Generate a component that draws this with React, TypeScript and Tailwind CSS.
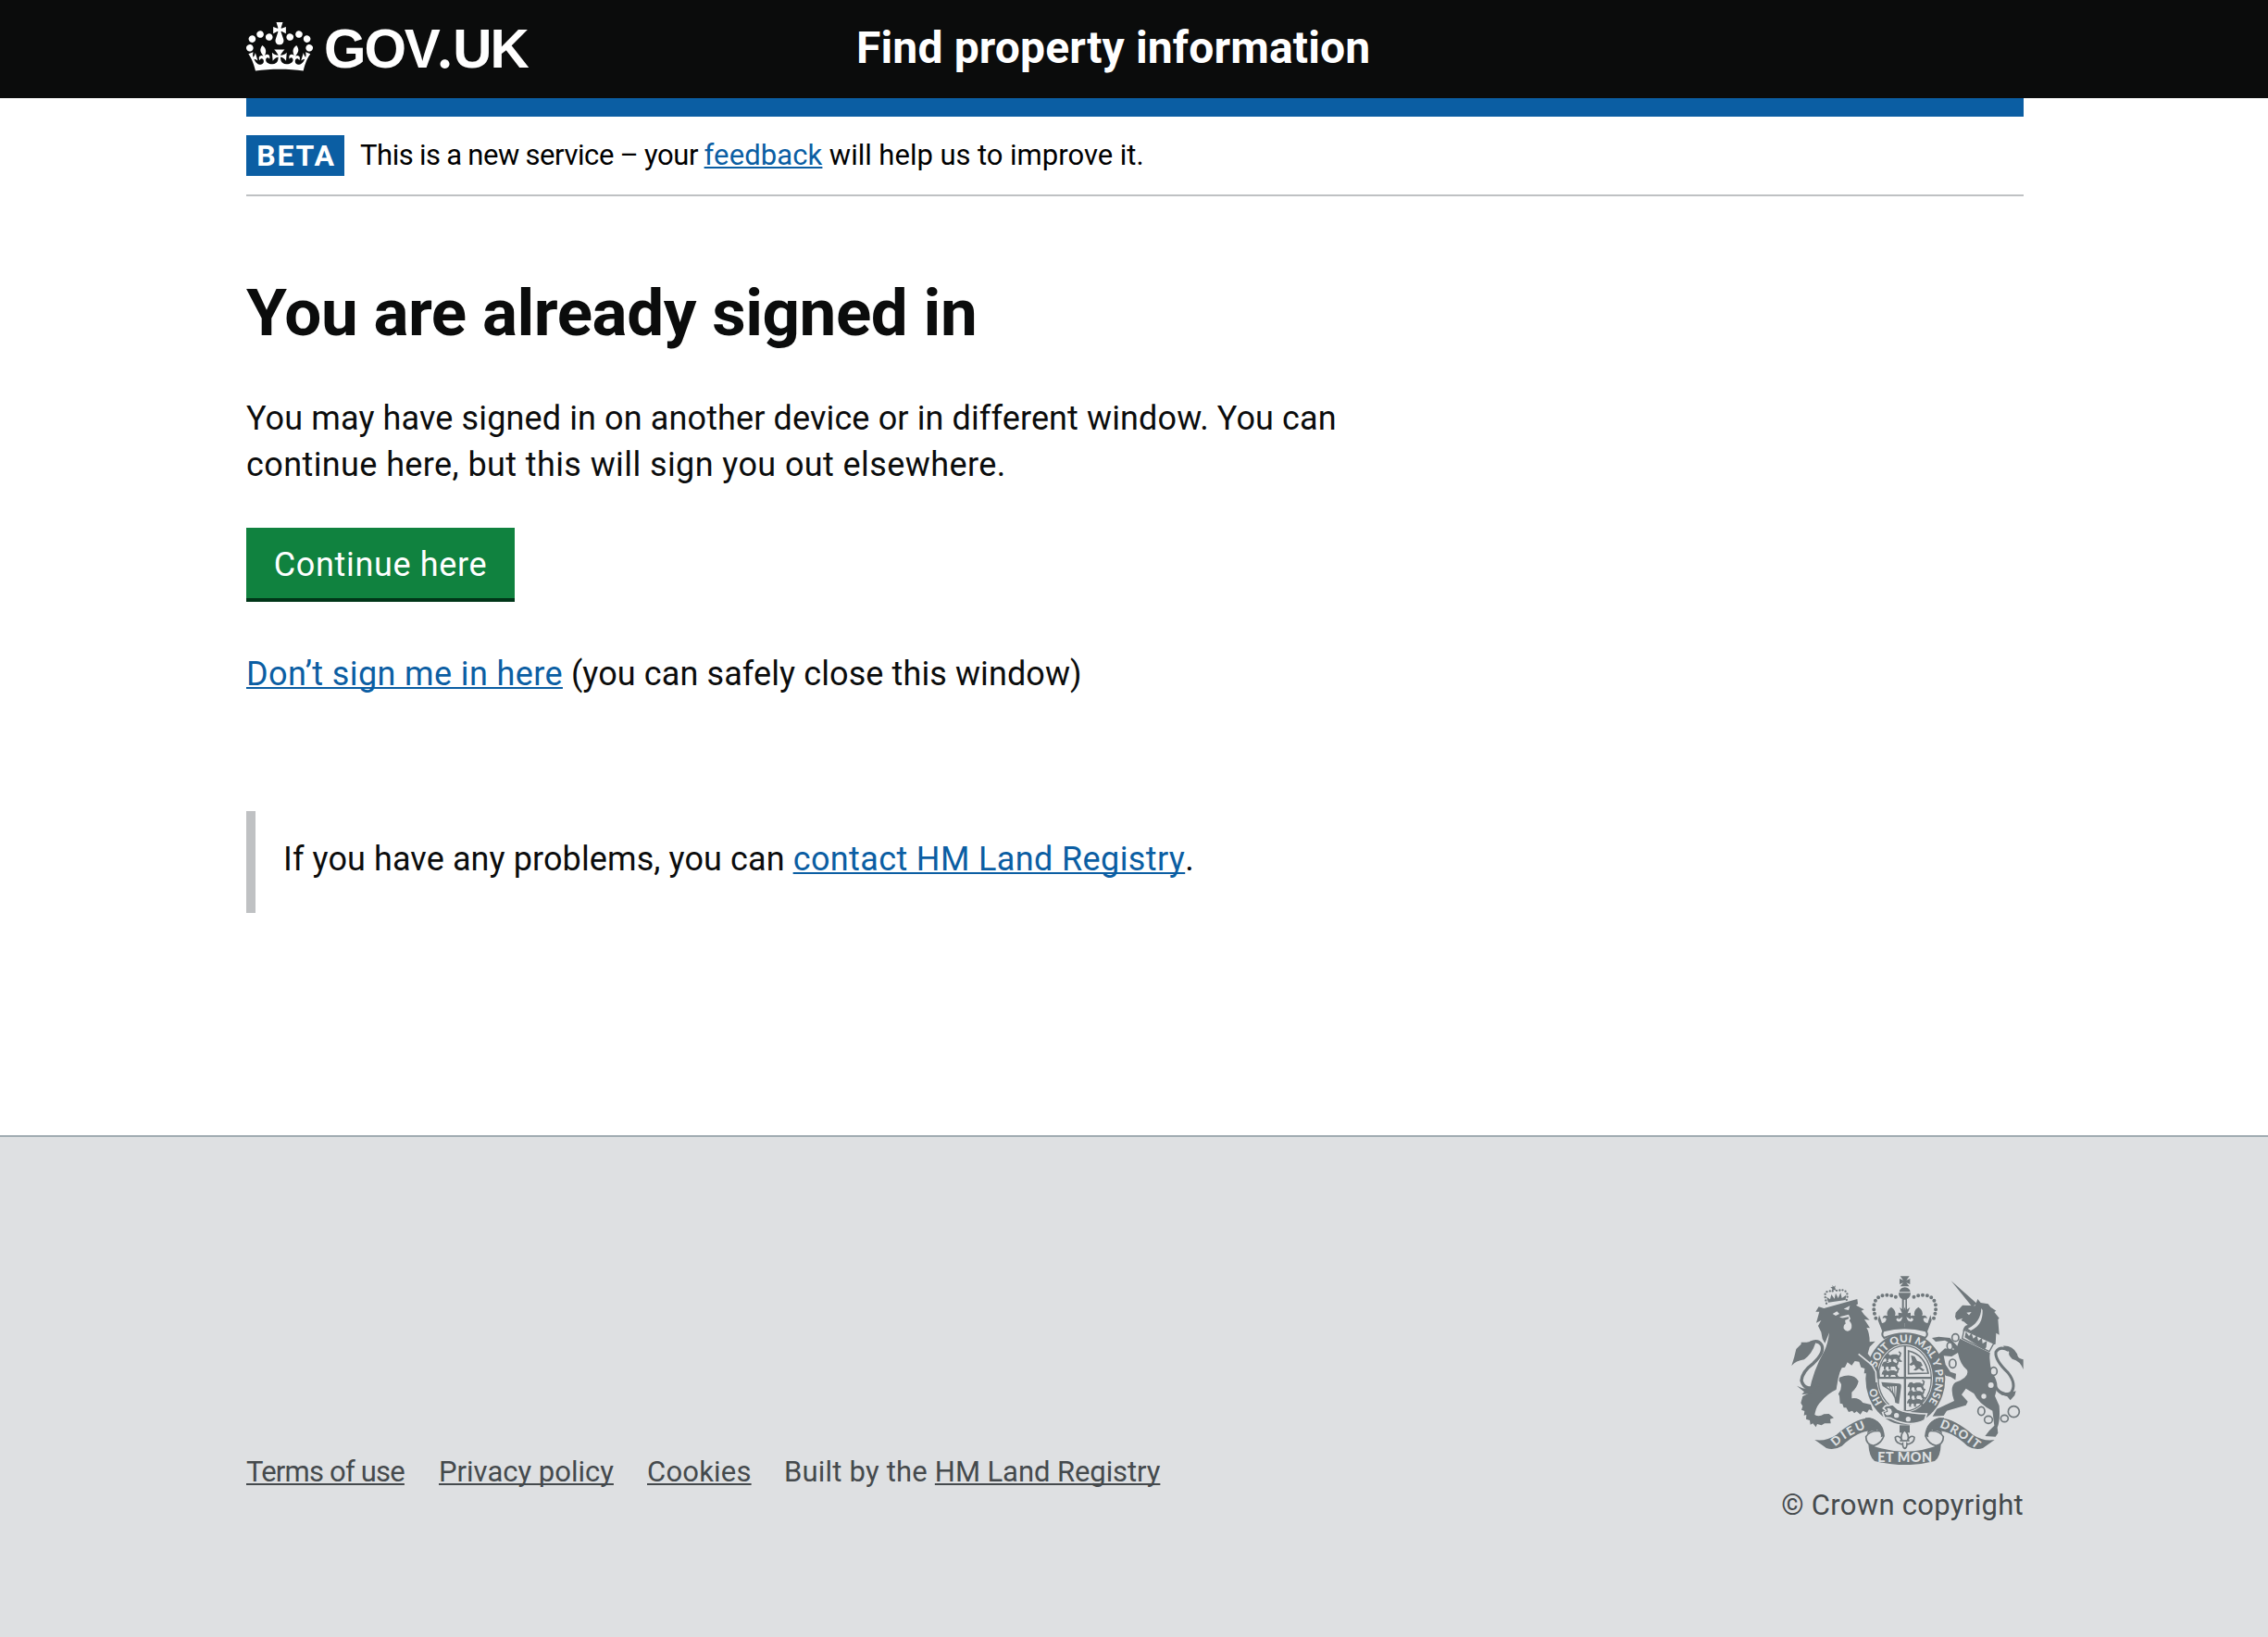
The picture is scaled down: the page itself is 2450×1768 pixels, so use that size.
import type { ReactNode } from 'react';

const INK = '#6f777b';
const PAPER = '#dee0e2';

function Link({ children, className = '' }: { children: ReactNode; className?: string }) {
  return (
    <a
      href="#"
      className={`underline decoration-2 underline-offset-2 [text-decoration-skip-ink:none] ${className}`}
    >
      {children}
    </a>
  );
}

function Crown() {
  return (
    <svg className="h-[53px] w-[72px] shrink-0" viewBox="0 0 132 97" aria-hidden="true">
      <path
        fill="currentColor"
        fillRule="evenodd"
        d="M25 30.2c3.5 1.5 7.7-.2 9.1-3.7 1.5-3.6-.2-7.8-3.9-9.2-3.6-1.4-7.6.3-9.1 3.9-1.4 3.5.3 7.5 3.9 9zM9 39.5c3.6 1.5 7.8-.2 9.2-3.7 1.5-3.6-.2-7.8-3.9-9.1-3.6-1.5-7.6.2-9.1 3.8-1.4 3.5.3 7.5 3.8 9zM4.4 57.2c3.5 1.5 7.7-.2 9.1-3.8 1.5-3.6-.2-7.7-3.9-9.1-3.5-1.5-7.6.3-9.1 3.8-1.4 3.5.3 7.6 3.9 9.1zm38.3-21.4c3.5 1.5 7.7-.2 9.1-3.8 1.5-3.6-.2-7.7-3.9-9.1-3.6-1.5-7.6.3-9.1 3.8-1.3 3.6.4 7.7 3.9 9.1zm64.4-5.6c-3.6 1.5-7.8-.2-9.1-3.7-1.5-3.6.2-7.8 3.8-9.2 3.6-1.4 7.7.3 9.2 3.9 1.3 3.5-.4 7.5-3.9 9zm15.9 9.3c-3.6 1.5-7.7-.2-9.1-3.7-1.5-3.6.2-7.8 3.7-9.1 3.6-1.5 7.7.2 9.2 3.8 1.5 3.5-.3 7.5-3.8 9zm4.7 17.7c-3.6 1.5-7.8-.2-9.2-3.8-1.5-3.6.2-7.7 3.9-9.1 3.6-1.5 7.7.3 9.2 3.8 1.3 3.5-.4 7.6-3.9 9.1zM89.3 35.8c-3.6 1.5-7.8-.2-9.2-3.8-1.4-3.6.2-7.7 3.9-9.1 3.6-1.5 7.7.3 9.2 3.8 1.4 3.6-.3 7.7-3.9 9.1zM69.7 17.7l8.9 4.7V9.3l-8.9 2.8c-.2-.3-.5-.6-.9-.9L72.4 0H59.6l3.5 11.2c-.3.3-.6.5-.9.9l-8.8-2.8v13.1l8.8-4.7c.3.3.6.7.9.9l-5 15.4v.1c-.2.8-.4 1.6-.4 2.4 0 4.1 3.1 7.5 7 8.1h.2c.3 0 .7.1 1 .1.4 0 .7 0 1-.1h.2c4-.6 7.1-4.1 7.1-8.1 0-.8-.1-1.7-.4-2.4V34l-5.1-15.4c.4-.2.7-.6 1-.9zM66 92.8c16.9 0 32.8 1.1 47.1 3.2 4-16.9 8.9-26.7 14-33.5l-9.6-3.4c1 4.9 1.1 7.2 0 10.2-1.5-1.4-3-4.3-4.2-8.7L108.6 76c2.8-2 5-3.2 7.5-3.3-4.4 9.4-10 11.9-13.6 11.2-4.3-.8-6.3-4.6-5.6-7.9 1-4.7 5.7-5.9 8-.5 4.3-8.7-3-11.4-7.6-8.8 7.1-7.2 7.9-13.5 2.1-21.1-8 6.1-8.1 12.3-4.5 20.8-4.7-5.4-12.1-2.5-9.5 6.2 3.4-5.2 7.9-2 7.2 3.1-.6 4.3-6.4 7.8-13.5 7.2-10.3-.9-10.9-8-11.2-13.8 2.5-.5 7.1 1.8 11 7.3L80.2 60c-4.1 4.4-8 5.3-12.3 5.4 1.4-4.4 8-11.6 8-11.6H55.5s6.4 7.2 7.9 11.6c-4.2-.1-8-1-12.3-5.4l1.4 16.4c3.9-5.5 8.5-7.7 10.9-7.3-.3 5.8-.9 12.8-11.1 13.8-7.2.6-12.9-2.9-13.5-7.2-.7-5 3.8-8.3 7.1-3.1 2.7-8.7-4.6-11.6-9.4-6.2 3.7-8.5 3.6-14.7-4.6-20.8-5.8 7.6-5 13.9 2.2 21.1-4.7-2.6-11.9.1-7.7 8.8 2.3-5.5 7.1-4.2 8.1.5.7 3.3-1.3 7.1-5.7 7.9-3.5.7-9-1.8-13.5-11.2 2.5.1 4.7 1.3 7.5 3.3l-4.7-15.4c-1.2 4.4-2.7 7.2-4.3 8.7-1.1-3-.9-5.3 0-10.2l-9.5 3.4c5 6.9 9.9 16.7 14 33.5 14.8-2.1 30.8-3.2 47.7-3.2z"
      />
    </svg>
  );
}

/* One walking lion of the English quarters. */
function Passant({ x, y }: { x: number; y: number }) {
  return (
    <path
      transform={`translate(${x} ${y})`}
      d="M0 3l5-8 8-2 5 5 9-3 12 0 8 4 3-6-5-5 3-3 7 6-3 12-3 3 3 8 5 2-1 4-9-1-5-9-12 0-3 6 4 4-9 0-1-9-6-2-4 7 3 4-8 0 0-9-3-3-4 2z"
    />
  );
}

function HalfScroll() {
  return (
    <g>
      <path d="M152 584Q188 590 222 568Q280 518 326 513Q350 514 364 536L350 556Q300 548 240 604Q214 620 190 611Z" />
      <path
        d="M326 515Q372 522 376 572Q366 598 342 603Q318 598 318 574Q330 552 366 556"
        fill={PAPER}
        stroke={INK}
        strokeWidth="5"
      />
      <path d="M330 513Q372 524 377 572L366 576Q370 560 354 552Q332 552 322 566Q322 546 346 538L316 536V513Z" />
    </g>
  );
}

function HalfCrown() {
  return (
    <g>
      <path
        d="M350 190C336 150 344 116 384 115C404 115 416 121 424 128"
        fill="none"
        stroke={INK}
        strokeWidth="12"
        strokeLinecap="round"
        strokeDasharray="0 14.5"
      />
      <path d="M349 176l8 20 4-16 9 26q14-2 14-14-6-6-12 0 0-14 16-10-6-16 12-28 18 12 12 28 16-4 16 10-8-6-12 2 4 12 18 4l10-12v42q-38 0-71 10z" />
    </g>
  );
}

function CoatOfArms() {
  return (
    <svg
      className="h-[204px] w-[251px]"
      viewBox="76 53 753 612"
      fill={INK}
      fontFamily="Lato, sans-serif"
      fontWeight="900"
      aria-hidden="true"
    >
      <defs>
        <path id="motto" d="M387 480A98 118 0 1 1 505 480" />
        <path id="left-ribbon" d="M219 607Q262 566 330 543" />
        <path id="right-ribbon" d="M556 543Q610 562 672 611" />
      </defs>

      {/* Garter */}
      <ellipse cx="446" cy="386" rx="129" ry="149" />
      <ellipse cx="444" cy="385" rx="91" ry="111" fill={PAPER} />
      <ellipse cx="444" cy="385" rx="86" ry="106" fill={PAPER} stroke={INK} strokeWidth="4" />
      <path d="M441 280h7v211h-7zM358 380h172v7H358z" />

      {/* Quarterings */}
      <Passant x={378} y={312} />
      <Passant x={370} y={337} />
      <Passant x={370} y={364} />
      <Passant x={454} y={404} />
      <Passant x={454} y={431} />
      <Passant x={452} y={457} />
      <path d="M456 296q52 12 64 72l-64 2z" fill="none" stroke={INK} strokeWidth="5" />
      <path d="M464 310l12 4 8 14 12 4 6 12-8 4 14 10-6 4-12-8-10 6-8-2 8-8-6-10-10 4-6-4 10-8z" />
      <path d="M368 397l56 5q10 0 8 12l-7 54-12-4Q412 430 372 410z" />
      <path d="M384 412l34-2-3 36q-8-22-31-34" fill={PAPER} />
      <path d="M393 408l6 16M402 408l4 26M411 408l1 34" stroke={INK} strokeWidth="3" />

      {/* Buckle and strap */}
      <path d="M381 474L405 470 420 484Q455 500 515 500L508 520Q460 546 398 514L378 512 372 496 386 492 374 482z" stroke={PAPER} strokeWidth="5" />
      <path d="M384 480q18-2 20 14-4 14-20 12l-8-10 12-4z" stroke={INK} strokeWidth="3" fill={PAPER} />
      <circle cx="417" cy="505" r="8" fill={PAPER} />
      <circle cx="455" cy="517" r="8" fill={PAPER} />

      {/* Royal crown */}
      <path d="M429 54h30l-10 13 12-5v18l-12-5 10 12h-30l10-12-12 5V62l12 5z" />
      <path d="M426 105q2-14 18-15 16 1 18 15z" />
      <path d="M424 108h39q-1 16-12 20v38h-5v-36h-5v36h-6v-38q-11-4-11-20z" />
      <path d="M427 155l13 9 3-10 4 10 14-9-8 19 10-2v22l-14-8 8 20h-28l8-20-14 8v-22l12 2z" />
      <HalfCrown />
      <g transform="matrix(-1 0 0 1 888 0)"><HalfCrown /></g>
      <path
        d="M375 231Q443 212 512 231Q522 244 510 254Q443 226 377 254Q366 244 375 231z"
        fill={PAPER}
        stroke={INK}
        strokeWidth="6"
      />

      {/* Lion */}
      <path d="M196 139l-6-18 12 8 4-16 10 14 4-18 8 16 8-18 4 18 14-10-2 16z" />
      <path
        d="M190 142l-5-26q2-14 16-14l8 2 6-10 10 8q20-8 30 4 6 10 0 26"
        fill="none"
        stroke={INK}
        strokeWidth="7"
        strokeLinecap="round"
        strokeDasharray="0 10"
      />
      <path d="M209 83l5 5 6-4-3 9 5 8-8-3-6 5 1-8-6-6 7 0z" />
      <path d="M182 158L290 128l2 16-6 4 26 14-9 4 9 12 18 18-17-2 18 28-11-1q10 16 10 46l18-2-18 18-6 22 20 26q20 18 20 54l-10 0-4 16-8-6-10 4 2-16-12 0 4-14-14 0 2-16-12-4-6-18-14-2-10 14-14-10-8 16-10 2q-8 14-12 34l-6 36q-30 14-48 38-18 16-22 44 14 8 30-2l16-1 16 13-12 4 2 14-20 0-10 6-14-4-4 10-10-12-8 4-2-14-12-4 1-14-8 2 2-14-10-4 4-12-6-10 6-22 20-10q14-74 50-136 12-24 16-60l-14 34-8-14-4-22-10-20 10-18-16 8 10-36-12 0 10-16z" />
      <path d="M232 382q44-18 62 12 -4 20-22 36v20q22-4 36 14l26 6 6 20-12-4-6 10-14-6-8 12-12-10-8 6-6-8-12 4-8-14-8 0-4-12-8-2-2-24q-8-10-4-26z" />
      <path d="M228 392q14 6 8 30l-10 18-10 2q10-24 12-50z" fill={PAPER} />
      <path d="M294 306l44 36 12 22 2 34" stroke={PAPER} strokeWidth="5" fill="none" />
      <path d="M210 176l14-8 8 8-12 6zM246 160l20-10-4 14zM232 186l30-8 6 14-4 6q14 16 4 30-12 10-22-4-2-12 6-16l-2-14z" fill={PAPER} />
      <path d="M238 190l24-4 0 6-14 6z" />
      <path
        d="M168 405Q120 432 109 392Q112 362 148 336Q186 300 174 276Q162 258 138 270"
        fill="none"
        stroke={INK}
        strokeWidth="10"
      />
      <path d="M154 262l-28 6-18 0 0 6-16 16q-6 28-15 54 14-16 41-20 26-20 36-52zM94 409l18 8q24 4 50-18-4 26-22 36l-30 2 8-8z" />

      {/* Unicorn */}
      <path d="M594 69l84 74-16 10z" />
      <path d="M672 150l8-22 10 12 24 4 8 10 18 12-6 4 16 20-4 4 4 50-10-6-2 36-6 2-92-48-8 4q4-20 16-20l-14-12-16 6 14-16-20 6-5-10 2-14 22-24z" />
      <path d="M692 158q-2 46-44 66l10 6q40-18 38-66z" fill={PAPER} />
      <path d="M644 172l16-2-8 10zM612 202l16-6 4 6-12 6z" fill={PAPER} />
      <path d="M636 228l96 44-14 26-88-42z" fill={PAPER} stroke={INK} strokeWidth="4" />
      <path d="M638 252l4-18 10 14 8-10 6 18 12-10 4 18 12-10 2 18 14-8-2 20-6 8z" />
      <path d="M622 256l98 46q-4 34 8 66 20 30 14 52l-6 22 14 32q4 46-6 70l2 18-8 12-34-2 14-18 16-16-6-48q-44-22-60-56l-26-16-14 20 20 22-6 12-62 18-10 16-36 2 14-24 56-26q-16-46 4-60 46-16 38-40-22-16-30-56l-20 12-26-2 6 28 16 24 18 6-2 20-16-10-16-4-20-36-8-28 26-24 30 4-10-20-20-10-30 4-12-12 22-4 36 4 24 26z" />
      <path
        d="M728 388Q748 450 788 432Q808 404 778 366Q736 326 739 300Q752 278 780 294"
        fill="none"
        stroke={INK}
        strokeWidth="9"
      />
      <path d="M762 280q32-2 46 26 2 16 20 18v32q-10-28-36-34-14-12-10-22zM746 418q24 22 58 8l-4 14-14 16-10-12-20-6z" />
      <g fill="none" stroke={INK} strokeWidth="5">
        <ellipse cx="608" cy="253" rx="11" ry="12" />
        <ellipse cx="590" cy="280" rx="9" ry="12" />
        <ellipse cx="599" cy="337" rx="11" ry="14" fill={PAPER} />
        <ellipse cx="732" cy="362" rx="11" ry="13" fill={PAPER} />
        <ellipse cx="692" cy="491" rx="11" ry="14" />
        <ellipse cx="715" cy="519" rx="13" ry="12" />
        <ellipse cx="767" cy="515" rx="12" ry="11" />
        <circle cx="797" cy="493" r="18" />
      </g>
      <circle cx="723" cy="407" r="9" fill={PAPER} />
      <circle cx="700" cy="443" r="8" fill={PAPER} />

      {/* Garter lettering */}
      <text fontSize="34" fill={PAPER}>
        <textPath href="#motto" startOffset="22">HO</textPath>
      </text>
      <text fontSize="34" fill={PAPER}>
        <textPath href="#motto" startOffset="140" textLength="385" lengthAdjust="spacingAndGlyphs">
          SOIT QUI MAL Y PENSE
        </textPath>
      </text>

      {/* Scroll and fleur-de-lis */}
      <HalfScroll />
      <g transform="matrix(-1 0 0 1 887 0)"><HalfScroll /></g>
      <path d="M326 598Q443 646 561 598Q560 640 541 653Q443 678 346 653Q328 638 326 598z" />
      <path d="M427 537h33v24h-33z" />
      <path
        d="M443 552q-16 18-8 34-10-20-22-10 0 16 14 20 6 4 10 0 0 14 7 16 7-2 7-16 4 4 10 0 14-4 14-20-12-10-22 10 8-16-10-34z"
        fill={PAPER}
        stroke={INK}
        strokeWidth="5"
      />
      <path d="M428 587h31" stroke={INK} strokeWidth="5" />
      <text x="356" y="655" fontSize="43" textLength="176" fill={PAPER}>ET MON</text>
      <text fontSize="39" fill={PAPER}>
        <textPath href="#left-ribbon" textLength="116">DIEU</textPath>
      </text>
      <text fontSize="39" fill={PAPER}>
        <textPath href="#right-ribbon" textLength="140">DROIT</textPath>
      </text>
    </svg>
  );
}

export default function App() {
  return (
    <div className="flex h-[1768px] w-full flex-col overflow-hidden bg-white font-['Roboto',sans-serif] text-[#0b0c0c]">
      <header className="h-[106px] bg-[#0b0c0c] text-white">
        <div className="ml-[266px] flex h-full w-[1920px] items-start pt-6">
          <a href="#" className="flex w-[660px] items-start">
            <Crown />
            <span className="-mt-1 ml-3 font-['Liberation_Sans',sans-serif] text-[58.5px] leading-[64px] font-bold tracking-[-2.1px]">
              GOV<span className="-ml-[3px] font-['Inter',sans-serif] tracking-[-1px]">.</span>UK
            </span>
          </a>
          <a href="#" className="-ml-px text-[48px] leading-[56px] font-bold tracking-[0.15px]">
            Find property information
          </a>
        </div>
      </header>

      <div className="ml-[266px] w-[1920px]">
        <div className="h-5 bg-[#0b5ea3]" />
        <div className="flex h-[86px] items-center border-b-2 border-[#bfc1c3] text-[31px] leading-10 text-black">
          <strong className="flex h-11 w-[106px] items-center justify-center bg-[#0b5ea3] pl-[2px] text-[32px] leading-[44px] font-bold tracking-[1.8px] text-white">
            BETA
          </strong>
          <p className="ml-[17px] whitespace-nowrap">
            <span className="tracking-[-0.42px] [word-spacing:-0.7px]">This is a new service – your </span>
            <Link className="tracking-[0.1px] text-[#0b5ea3]">feedback</Link>
            <span className="tracking-[0.04px] [word-spacing:-0.3px]"> will help us to improve it.</span>
          </p>
        </div>

        <main className="h-[1014px] pt-[86px] text-[36px] leading-[50px]">
          <h1 className="text-[71px] leading-[80px] font-bold tracking-[-0.45px]">You are already signed in</h1>
          <p className="mt-[49px] whitespace-nowrap">
            <span className="tracking-[0.12px]">You may have signed in on another device or in different window. You can</span>
            <br />
            <span className="tracking-[0.4px]">continue here, but this will sign you out elsewhere.</span>
          </p>
          <button className="mt-[43px] block h-20 w-[290px] border-b-4 border-[#003618] bg-[#10823f] pt-[3px] text-center tracking-[0.65px] text-white">
            Continue here
          </button>
          <p className="mt-[53px] tracking-[0.1px]">
            <Link className="tracking-[0.38px] text-[#0b5ea3]">Don’t sign me in here</Link> (you can safely close this window)
          </p>
          <div className="mt-[123px] h-[110px] border-l-10 border-[#bfc1c3] pt-[27px] pl-[30px] tracking-[0.1px]">
            If you have any problems, you can{' '}
            <Link className="tracking-[0.38px] text-[#0b5ea3]">contact HM Land Registry</Link>.
          </div>
        </main>
      </div>

      <footer className="flex-1 border-t-2 border-[#a1acb2] bg-[#dee0e2] text-[31px] leading-10 text-[#454a4d]">
        <div className="ml-[266px] flex w-[1920px] items-end justify-between pt-[150px]">
          <ul className="flex pb-9">
            <li className="w-[208px]"><Link className="tracking-[-0.8px]">Terms of use</Link></li>
            <li className="w-[225px]"><Link>Privacy policy</Link></li>
            <li className="w-[148px]"><Link className="tracking-[0.2px]">Cookies</Link></li>
            <li><span className="tracking-[0.2px]">Built by the </span><Link className="tracking-[-0.08px]">HM Land Registry</Link></li>
          </ul>
          <a href="#" className="flex flex-col items-end">
            <CoatOfArms />
            <span className="mt-6 tracking-[0.3px]">© Crown copyright</span>
          </a>
        </div>
      </footer>
    </div>
  );
}
